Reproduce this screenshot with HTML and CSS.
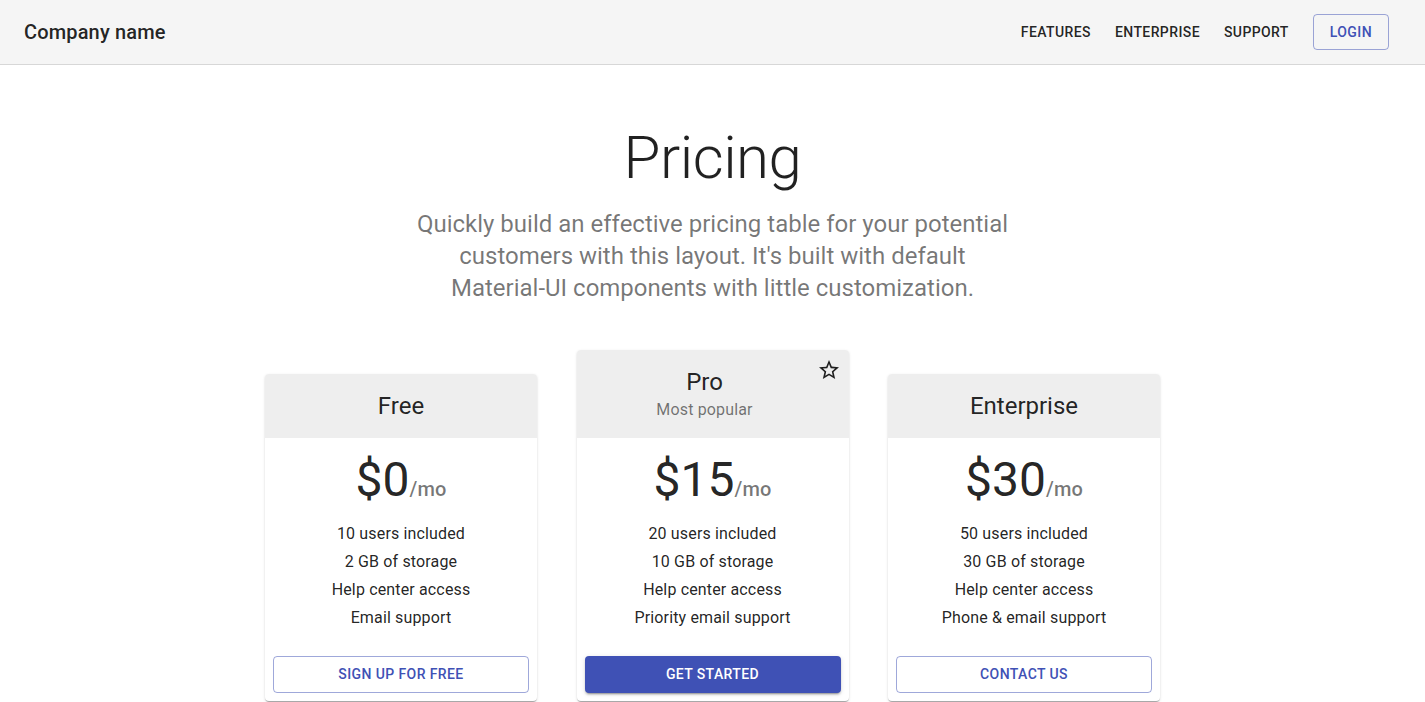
FILE: index.html
```html
<!DOCTYPE html>
<html lang="en">
<head>
<meta charset="utf-8">
<title>Pricing</title>
<link rel="stylesheet" href="styles.css">
</head>
<body>
<header class="appbar">
  <div class="toolbar">
    <h6 class="brand">Company name</h6>
    <nav class="nav">
      <a class="nav-link" href="#">Features</a>
      <a class="nav-link" href="#">Enterprise</a>
      <a class="nav-link" href="#">Support</a>
    </nav>
    <a class="btn btn-outlined login" href="#">Login</a>
  </div>
</header>

<section class="hero">
  <h2 class="hero-title">Pricing</h2>
  <p class="hero-sub">Quickly build an effective pricing table for your potential customers with this layout. It's built with default Material-UI components with little customization.</p>
</section>

<main class="tiers">
  <div class="card">
    <div class="card-header">
      <div class="card-header-content">
        <div class="card-title">Free</div>
      </div>
    </div>
    <div class="card-content">
      <div class="pricing"><span class="price">$0</span><span class="per">/mo</span></div>
      <ul class="features">
        <li>10 users included</li>
        <li>2 GB of storage</li>
        <li>Help center access</li>
        <li>Email support</li>
      </ul>
    </div>
    <div class="card-actions"><a class="btn btn-outlined full" href="#">Sign up for free</a></div>
  </div>

  <div class="card">
    <div class="card-header">
      <div class="card-header-content">
        <div class="card-title">Pro</div>
        <div class="card-sub">Most popular</div>
      </div>
      <div class="card-header-action">
        <svg class="star" viewBox="0 0 24 24" width="24" height="24"><path d="M22 9.24l-7.19-.62L12 2 9.19 8.63 2 9.24l5.46 4.73L5.82 21 12 17.27 18.18 21l-1.63-7.03L22 9.24zM12 15.4l-3.76 2.27 1-4.28-3.32-2.88 4.38-.38L12 6.1l1.71 4.04 4.38.38-3.32 2.88 1 4.28L12 15.4z"/></svg>
      </div>
    </div>
    <div class="card-content">
      <div class="pricing"><span class="price">$15</span><span class="per">/mo</span></div>
      <ul class="features">
        <li>20 users included</li>
        <li>10 GB of storage</li>
        <li>Help center access</li>
        <li>Priority email support</li>
      </ul>
    </div>
    <div class="card-actions"><a class="btn btn-contained full" href="#">Get started</a></div>
  </div>

  <div class="card">
    <div class="card-header">
      <div class="card-header-content">
        <div class="card-title">Enterprise</div>
      </div>
    </div>
    <div class="card-content">
      <div class="pricing"><span class="price">$30</span><span class="per">/mo</span></div>
      <ul class="features">
        <li>50 users included</li>
        <li>30 GB of storage</li>
        <li>Help center access</li>
        <li>Phone &amp; email support</li>
      </ul>
    </div>
    <div class="card-actions"><a class="btn btn-outlined full" href="#">Contact us</a></div>
  </div>
</main>
</body>
</html>
```

FILE: styles.css
```css
* { box-sizing: border-box; }
html, body { margin: 0; padding: 0; }
body {
  font-family: Roboto, "Liberation Sans", Arial, sans-serif;
  color: rgba(0,0,0,0.87);
  background: #fff;
  font-size: 16px;
}

.appbar {
  background: #f5f5f5;
  border-bottom: 1px solid rgba(0,0,0,0.12);
}
.toolbar {
  display: flex;
  align-items: center;
  min-height: 64px;
  padding: 0 24px;
}
.brand {
  flex: 1;
  margin: 0;
  font-size: 20px;
  font-weight: 500;
  line-height: 1.6;
  letter-spacing: 0.0075em;
}
.nav { display: flex; }
.nav-link {
  margin: 8px 12px;
  font-size: 14px;
  font-weight: 500;
  line-height: 1.75;
  letter-spacing: 0.02857em;
  text-transform: uppercase;
  color: rgba(0,0,0,0.87);
  text-decoration: none;
}

.btn {
  display: inline-flex;
  align-items: center;
  justify-content: center;
  min-width: 64px;
  font-size: 14px;
  font-weight: 500;
  line-height: 1.75;
  letter-spacing: 0.02857em;
  text-transform: uppercase;
  text-decoration: none;
  border-radius: 4px;
}
.btn-outlined {
  padding: 5px 15px;
  border: 1px solid rgba(63,81,181,0.5);
  color: #3f51b5;
}
.btn-contained {
  padding: 6px 16px;
  background: #3f51b5;
  color: #fff;
  box-shadow: 0 3px 1px -2px rgba(0,0,0,0.2), 0 2px 2px 0 rgba(0,0,0,0.14), 0 1px 5px 0 rgba(0,0,0,0.12);
}
.login { margin: 8px 12px; padding: 5px 16px; }
.full { width: 100%; }

.hero {
  max-width: 600px;
  margin: 0 auto;
  padding: 57px 0 46px;
  text-align: center;
}
.hero-title {
  margin: 0 0 14px;
  font-size: 60px;
  font-weight: 300;
  line-height: 1.2;
  letter-spacing: -0.00833em;
}
.hero-sub {
  margin: 0;
  font-size: 24px;
  font-weight: 400;
  line-height: 1.334;
  color: rgba(0,0,0,0.54);
}

.tiers {
  display: grid;
  grid-template-columns: repeat(3, 272px);
  justify-content: center;
  align-items: end;
  column-gap: 39.5px;
  padding-bottom: 48px;
}
.card {
  background: #fff;
  border-radius: 4px;
  overflow: hidden;
  box-shadow: 0 2px 1px -1px rgba(0,0,0,0.2), 0 1px 1px 0 rgba(0,0,0,0.14), 0 1px 3px 0 rgba(0,0,0,0.12);
}
.card-header {
  display: flex;
  align-items: flex-start;
  background: #eeeeee;
  padding: 16px;
}
.card-header-content {
  flex: 1;
  text-align: center;
}
.card-header-action {
  flex: 0 0 auto;
  display: flex;
  margin: -8px -8px 0 0;
}
.card-title {
  font-size: 24px;
  line-height: 1.334;
}
.card-sub {
  font-size: 16px;
  line-height: 1.5;
  letter-spacing: 0.00938em;
  color: rgba(0,0,0,0.54);
}
.star { fill: rgba(0,0,0,0.87); }
.card-content { padding: 14px 16px 16px; }
.pricing {
  display: flex;
  justify-content: center;
  align-items: baseline;
  margin-bottom: 12px;
}
.price {
  font-size: 48px;
  line-height: 1.167;
}
.per {
  font-size: 20px;
  font-weight: 500;
  line-height: 1.6;
  letter-spacing: 0.0075em;
  color: rgba(0,0,0,0.54);
}
.features {
  list-style: none;
  margin: 0;
  padding: 0;
}
.features li {
  text-align: center;
  font-size: 16px;
  line-height: 1.75;
  letter-spacing: 0.00938em;
}
.card-actions {
  display: flex;
  padding: 8px;
}
```
